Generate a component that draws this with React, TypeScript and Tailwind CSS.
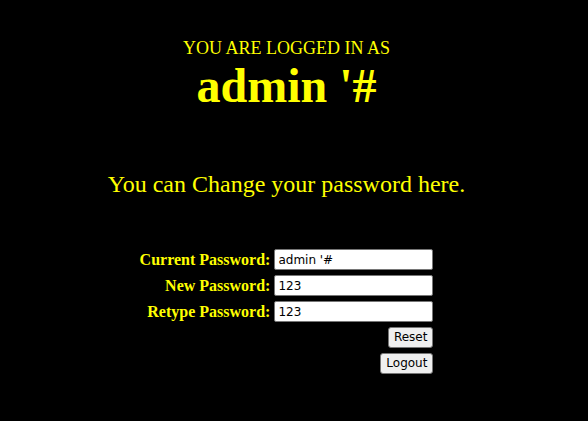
import React, { useState } from "react";

const serif = "font-['Liberation_Serif','Times_New_Roman',serif]";
const ui = "font-['DejaVu_Sans','Tahoma',sans-serif]";

const App = () => {
    const [current, setCurrent] = useState("admin '#")
    const [newPass, setNewPass] = useState("123")
    const [retype, setRetype] = useState("123")

    const reset = () => {
        setCurrent("")
        setNewPass("")
        setRetype("")
    }

    const rows = [
        { label: "Current Password:", value: current, set: setCurrent },
        { label: "New Password:", value: newPass, set: setNewPass },
        { label: "Retype Password:", value: retype, set: setRetype },
    ]

    const btn = `h-[21px] px-[5px] text-[12px] leading-[19px] text-black bg-[#efefef] border border-[#767676] rounded-[3px] ${ui}`

    return (
        <div className={`bg-black w-[588px] h-[421px] pr-[15px] flex flex-col items-center text-[#ffff00] ${serif}`}>
            {/* title */}
            <div className="text-[18px] leading-[22px] mt-[37px]">YOU ARE LOGGED IN AS</div>
            <div className="text-[48px] leading-[54px] font-bold">admin '#</div>

            <p className="text-[24px] leading-[28px] mt-[57px]">You can Change your password here.</p>

            {/* form */}
            <div className="mt-[51px] flex flex-col items-end gap-[5px]">
                {rows.map(row => (
                    <div key={row.label} className="flex items-center gap-[4px]">
                        <label className="text-[16px] leading-[21px] font-bold">{row.label}</label>
                        <input
                            type="text"
                            value={row.value}
                            onChange={e => row.set(e.target.value)}
                            className={`bg-white text-black w-[159px] h-[21px] px-[3px] text-[12px] border border-[#767676] rounded-[2px] outline-none ${ui}`}
                        />
                    </div>
                ))}
                <button onClick={reset} className={btn}>Reset</button>
                <button className={btn}>Logout</button>
            </div>
        </div>
    )
}

export default App
